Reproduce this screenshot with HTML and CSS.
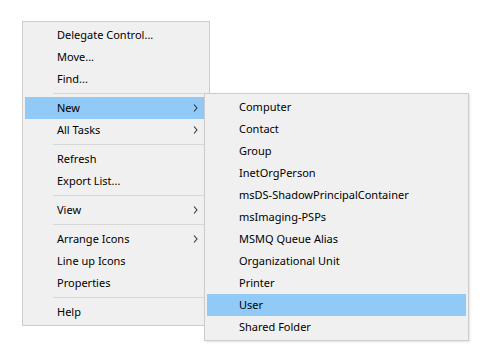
FILE: index.html
```html
<!DOCTYPE html>
<html lang="en">
<head>
  <meta charset="UTF-8">
  <title>Context Menu</title>
  <link rel="stylesheet" href="styles.css">
</head>
<body>
  <div class="stage">
    <ul class="menu main-menu">
      <li class="item">Delegate Control...</li>
      <li class="item">Move...</li>
      <li class="item">Find...</li>
      <li class="sep"></li>
      <li class="item active has-sub">New
        <svg class="chev" viewBox="0 0 5 8"><path d="M1 0.5 L4 4 L1 7.5" /></svg>
      </li>
      <li class="item has-sub">All Tasks
        <svg class="chev" viewBox="0 0 5 8"><path d="M1 0.5 L4 4 L1 7.5" /></svg>
      </li>
      <li class="sep"></li>
      <li class="item">Refresh</li>
      <li class="item">Export List...</li>
      <li class="sep"></li>
      <li class="item has-sub">View
        <svg class="chev" viewBox="0 0 5 8"><path d="M1 0.5 L4 4 L1 7.5" /></svg>
      </li>
      <li class="sep"></li>
      <li class="item has-sub">Arrange Icons
        <svg class="chev" viewBox="0 0 5 8"><path d="M1 0.5 L4 4 L1 7.5" /></svg>
      </li>
      <li class="item">Line up Icons</li>
      <li class="item">Properties</li>
      <li class="sep"></li>
      <li class="item">Help</li>
    </ul>

    <!-- submenu for "New" -->
    <ul class="menu sub-menu">
      <li class="item">Computer</li>
      <li class="item">Contact</li>
      <li class="item">Group</li>
      <li class="item">InetOrgPerson</li>
      <li class="item">msDS-ShadowPrincipalContainer</li>
      <li class="item">msImaging-PSPs</li>
      <li class="item">MSMQ Queue Alias</li>
      <li class="item">Organizational Unit</li>
      <li class="item">Printer</li>
      <li class="item active">User</li>
      <li class="item">Shared Folder</li>
    </ul>
  </div>
</body>
</html>
```

FILE: styles.css
```css
/* Base */
body, html {
  margin: 0;
  padding: 0;
  background: #ffffff;
  font-family: "Noto Sans", "Open Sans", Arial, sans-serif;
  font-size: 11px;
  color: #000000;
}

.stage {
  position: relative;
  min-height: 353px;
  box-sizing: border-box;
  padding: 21px 0 0 22px;
}

/* Menu box */
.menu {
  list-style: none;
  margin: 0;
  padding: 2px 0;
  background: #f0f0f0;
  border: 1px solid #cccccc;
  box-sizing: border-box;
}

.main-menu {
  width: 188px;
}

.sub-menu {
  position: absolute;
  left: 204px;
  top: 93px;
  width: 265px;
  box-shadow: 1px 1px 2px rgba(0, 0, 0, 0.12);
}

/* Items */
.item {
  position: relative;
  height: 22px;
  line-height: 22px;
  margin: 0 2px;
  padding-left: 32px;
  white-space: nowrap;
}

.item.active {
  background: #91c9f7;
}

.chev {
  position: absolute;
  right: 9px;
  top: 7px;
  width: 5px;
  height: 8px;
  fill: none;
  stroke: #333333;
  stroke-width: 1.1;
}

/* Separator */
.sep {
  height: 1px;
  margin: 3px 4px 3px 30px;
  background: #d7d7d7;
}
```
